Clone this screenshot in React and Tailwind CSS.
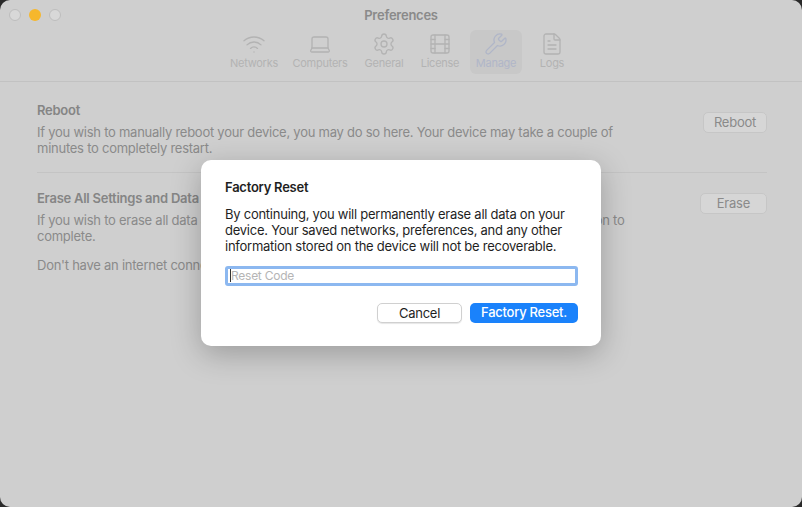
import React from "react";
import { Wifi, Laptop, Settings, Wrench, FileText, Film } from "lucide-react";

const tabs = [
  { label: "Networks", Icon: Wifi, w: "w-[60px]" },
  { label: "Computers", Icon: Laptop, w: "w-[72px]" },
  { label: "General", Icon: Settings, w: "w-[56px]" },
  { label: "License", Icon: Film, w: "w-[56px]" },
  { label: "Manage", Icon: Wrench, w: "w-[56px]", active: true },
  { label: "Logs", Icon: FileText, w: "w-[56px]" },
];

export default function App() {
  return (
    <div className="w-[802px] h-[507px] bg-[#2a2a2a] overflow-hidden tracking-[-0.25px]" style={{ fontFamily: "Inter, 'Liberation Sans', sans-serif" }}>
      <div className="relative w-[802px] h-[507px] rounded-[10px] bg-[#cfcfcf] overflow-hidden">
        <div className="h-[82px] border-b border-[#c2c2c2] relative">
          <div className="absolute left-[9px] top-[9px] flex gap-[8px]">
            <span className="w-[12px] h-[12px] rounded-full bg-[#d8d8d8] border border-[#bdbdbd]" />
            <span className="w-[12px] h-[12px] rounded-full bg-[#f6b72c]" />
            <span className="w-[12px] h-[12px] rounded-full bg-[#d8d8d8] border border-[#bdbdbd]" />
          </div>
          <div className="text-center pt-[6px] text-[13px] font-semibold text-[#8a8a8a]">Preferences</div>
          <div className="flex ml-[224px] mt-[4px]">
            {tabs.map(({ label, Icon, active, w }) => (
              <div key={label} className={`${w} flex flex-col items-center`}>
                <div className={`flex flex-col items-center w-[52px] pt-[2px] pb-[4px] rounded-md ${active ? "bg-[#c8c8c8]" : ""}`}>
                  <Icon size={24} strokeWidth={1.3} className={active ? "text-[#b0b6c8]" : "text-[#b3b3b3]"} />
                  <span className={`text-[11px] leading-[13px] mt-[1px] whitespace-nowrap ${active ? "text-[#b0b6c8]" : "text-[#b3b3b3]"}`}>{label}</span>
                </div>
              </div>
            ))}
          </div>
        </div>

        <div className="px-[37px] pt-[19px] text-[#8a8a8a] text-[13px]">
          <div className="flex justify-between">
            <div>
              <div className="font-semibold text-[#858585]">Reboot</div>
              <p className="mt-[3px] leading-[16px] w-[600px]">If you wish to manually reboot your device, you may do so here. Your device may take a couple of minutes to completely restart.</p>
            </div>
            <button className="mt-[11px] h-[21px] px-[10px] rounded-[5px] bg-[#d6d6d6] border border-[#c6c6c6] text-[13px] text-[#8a8a8a] mr-[-2px]">Reboot</button>
          </div>
          <div className="border-t border-[#c4c4c4] mt-[16px] mr-[-2px]" />
          <div className="flex justify-between pt-[16px]">
            <div>
              <div className="font-semibold text-[#858585]">Erase All Settings and Data</div>
              <p className="mt-[4px] leading-[16px] w-[620px]">If you wish to erase all data and settings, your device will need an internet connection connection to complete.</p>
              <p className="mt-[12px]">Don't have an internet connection?</p>
            </div>
            <button className="mt-[4px] h-[21px] px-[16px] rounded-[5px] bg-[#d6d6d6] border border-[#c6c6c6] text-[13px] text-[#8a8a8a] mr-[-2px]">Erase</button>
          </div>
        </div>

        <div className="absolute left-[201px] top-[160px] w-[400px] h-[186px] bg-white rounded-[10px] shadow-[0_8px_30px_rgba(0,0,0,0.25)] px-[24px] pt-[18px] text-[13px] text-[#1f1f1f]">
          <div className="font-semibold">Factory Reset</div>
          <p className="mt-[8px] leading-[16px] w-[352px]">By continuing, you will permanently erase all data on your device. Your saved networks, preferences, and any other information stored on the device will not be recoverable.</p>
          <div className="mt-[12px] h-[20px] w-[353px] border-[3px] border-[#8cb8f0] rounded-[3px] flex items-center px-[2px] text-[12px] text-[#b5b5b5]">
            <span className="w-px h-[13px] bg-[#333]" />Reset Code
          </div>
          <div className="flex justify-end gap-[8px] mt-[17px] w-[353px]">
            <button className="h-[20px] w-[85px] rounded-[5px] bg-white border border-[#d0d0d0] shadow-[0_1px_1px_rgba(0,0,0,0.1)] text-[13px]">Cancel</button>
            <button className="h-[20px] w-[108px] rounded-[5px] bg-[#1a82fb] text-white font-medium text-[13px]">Factory Reset.</button>
          </div>
        </div>
      </div>
    </div>
  );
}
